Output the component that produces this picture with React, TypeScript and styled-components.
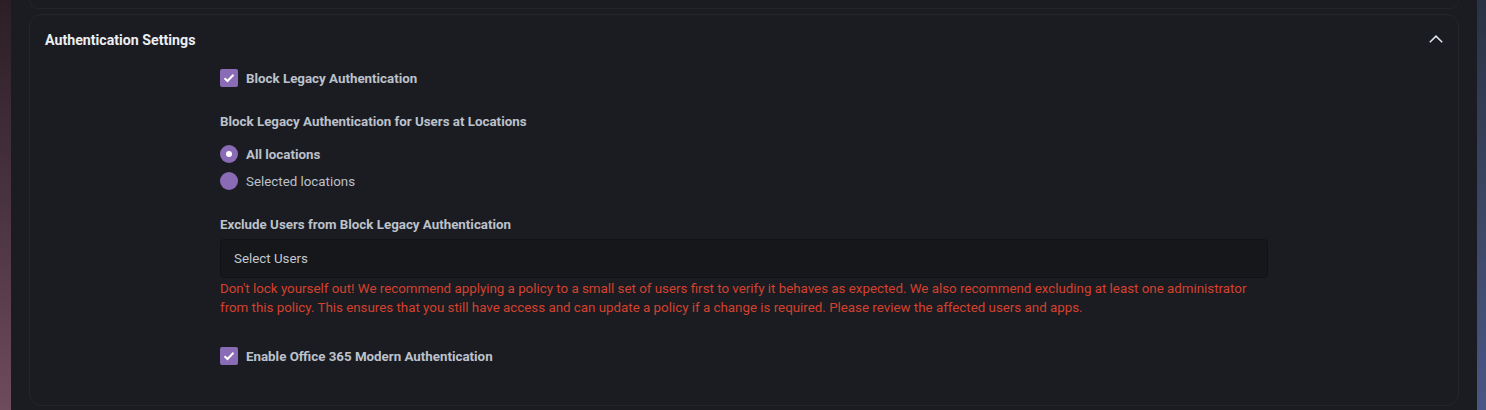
import React from "react";
import styled, { createGlobalStyle } from "styled-components";

const Global = createGlobalStyle`
  html, body { margin: 0; padding: 0; background: #1b1c21; }
  body { font-family: Roboto, "Liberation Sans", sans-serif; }
  * { box-sizing: border-box; }
`;

const Page = styled.div`
  display: flex;
  width: 1486px;
  height: 410px;
  overflow: hidden;
  background: #1b1c21;
`;

const LeftStrip = styled.div`
  width: 11px;
  flex: none;
  background: linear-gradient(180deg, #2b1f25 0%, #4a3340 50%, #6e4b5d 100%);
`;

const RightStrip = styled.div`
  width: 9px;
  flex: none;
  background: linear-gradient(180deg, #2a3244 0%, #3b4663 50%, #4a5684 100%);
`;

const Main = styled.div`
  flex: 1;
  display: flex;
  flex-direction: column;
  gap: 5px;
  padding: 0 18px 0 18px;
`;

const PrevCardEnd = styled.div`
  height: 9px;
  border: 1px solid #24252b;
  border-top: none;
  border-radius: 0 0 10px 10px;
  background: #1b1c21;
`;

const Card = styled.section`
  border: 1px solid #24252b;
  border-radius: 12px;
  background: #1b1c21;
  height: 392px;
`;

const CardHeader = styled.div`
  display: flex;
  align-items: center;
  justify-content: space-between;
  height: 50px;
  padding: 0 15px 0 15px;
`;

const CardTitle = styled.h2`
  margin: 0;
  font-size: 14.2px;
  font-weight: 700;
  color: #eceef2;
`;

const Chevron = styled.svg`
  width: 14px;
  height: 8px;
  margin-top: -2px;
`;

const Body = styled.div`
  display: flex;
  flex-direction: column;
  padding: 4px 0 0 190px;
`;

const CheckRow = styled.label<{ $mt?: number }>`
  display: flex;
  align-items: center;
  gap: 8px;
  height: 18px;
  margin-top: ${(p) => p.$mt ?? 0}px;
`;

const Box = styled.span`
  width: 18px;
  height: 18px;
  border-radius: 2px;
  background: #8a6cb6;
  display: flex;
  align-items: center;
  justify-content: center;
`;

const CheckLabel = styled.span`
  font-size: 13.33px;
  font-weight: 700;
  color: #bcc2cc;
`;

const Heading = styled.div<{ $mt: number }>`
  margin-top: ${(p) => p.$mt}px;
  font-size: 13.33px;
  font-weight: 700;
  line-height: 20px;
  color: #bcc2cc;
`;

const RadioRow = styled.label<{ $mt: number }>`
  display: flex;
  align-items: center;
  gap: 8px;
  height: 18px;
  margin-top: ${(p) => p.$mt}px;
`;

const RadioDot = styled.span<{ $checked?: boolean }>`
  width: 18px;
  height: 18px;
  border-radius: 50%;
  background: #8a6cb6;
  display: flex;
  align-items: center;
  justify-content: center;
  &::after {
    content: "";
    width: 6px;
    height: 6px;
    border-radius: 50%;
    background: #ffffff;
    display: ${(p) => (p.$checked ? "block" : "none")};
  }
`;

const RadioLabel = styled.span<{ $bold?: boolean }>`
  font-size: 13.33px;
  font-weight: ${(p) => (p.$bold ? 700 : 400)};
  color: #bcc2cc;
`;

const SelectBox = styled.div`
  margin-top: 4px;
  width: 1048px;
  height: 39px;
  border: 1px solid #111216;
  border-radius: 4px;
  background: #16171b;
  display: flex;
  align-items: center;
  padding-left: 13px;
  font-size: 13.33px;
  color: #c3c8d0;
`;

const Warning = styled.p`
  margin: 1px 0 0 0;
  width: 1048px;
  font-size: 13.33px;
  line-height: 19px;
  color: #d4412e;
`;

const Check = () => (
  <svg width="12" height="10" viewBox="0 0 12 10">
    <polyline points="1.5,5.2 4.5,8 10.5,1.8" fill="none" stroke="#ffffff" strokeWidth="2" />
  </svg>
);

export default function App() {
  return (
    <>
      <Global />
      <Page>
        <LeftStrip />
        <Main>
          <PrevCardEnd />
          <Card>
            <CardHeader>
              <CardTitle>Authentication Settings</CardTitle>
              <Chevron viewBox="0 0 14 8">
                <polyline points="0.8,7.3 7,1.1 13.2,7.3" fill="none" stroke="#dfe6f0" strokeWidth="1.5" />
              </Chevron>
            </CardHeader>
            <Body>
              <CheckRow>
                <Box><Check /></Box>
                <CheckLabel>Block Legacy Authentication</CheckLabel>
              </CheckRow>
              <Heading $mt={25}>Block Legacy Authentication for Users at Locations</Heading>
              <RadioRow $mt={13}>
                <RadioDot $checked />
                <RadioLabel $bold>All locations</RadioLabel>
              </RadioRow>
              <RadioRow $mt={9}>
                <RadioDot />
                <RadioLabel>Selected locations</RadioLabel>
              </RadioRow>
              <Heading $mt={25}>Exclude Users from Block Legacy Authentication</Heading>
              <SelectBox>Select Users</SelectBox>
              <Warning>
                Don't lock yourself out! We recommend applying a policy to a small set of users first to verify it behaves as expected. We also recommend excluding at least one administrator from this policy. This ensures that you still have access and can update a policy if a change is required. Please review the affected users and apps.
              </Warning>
              <CheckRow $mt={30}>
                <Box><Check /></Box>
                <CheckLabel>Enable Office 365 Modern Authentication</CheckLabel>
              </CheckRow>
            </Body>
          </Card>
        </Main>
        <RightStrip />
      </Page>
    </>
  );
}
